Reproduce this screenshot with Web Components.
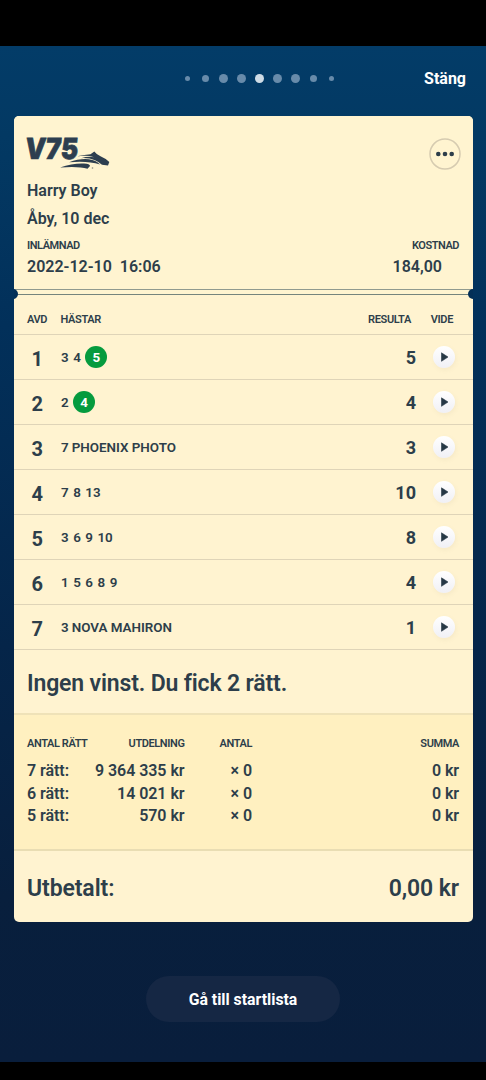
<!DOCTYPE html>
<html lang="sv">
<head>
<meta charset="utf-8">
<title>V75</title>
<style>
  html, body { margin: 0; height: 100%; background: #000; }
  body { font-family: Roboto, "Liberation Sans", sans-serif; font-weight: 600; color: #2d3e4a; overflow: hidden; }
</style>
</head>
<body>
<ticket-screen>
  <page-dots slot="dots"></page-dots>
  <bet-ticket>
    <ticket-head></ticket-head>
    <leg-header></leg-header>
    <leg-row avd="1" horses="3 4 *5" result="5"></leg-row>
    <leg-row avd="2" horses="2 *4" result="4"></leg-row>
    <leg-row avd="3" horses="7" name="PHOENIX PHOTO" result="3"></leg-row>
    <leg-row avd="4" horses="7 8 13" result="10"></leg-row>
    <leg-row avd="5" horses="3 6 9 10" result="8"></leg-row>
    <leg-row avd="6" horses="1 5 6 8 9" result="4"></leg-row>
    <leg-row avd="7" horses="3" name="NOVA MAHIRON" result="1"></leg-row>
    <ticket-verdict>Ingen vinst. Du fick 2 rätt.</ticket-verdict>
    <payout-table></payout-table>
    <ticket-total><span>Utbetalt:</span><span>0,00 kr</span></ticket-total>
  </bet-ticket>
  <pill-button slot="action">Gå till startlista</pill-button>
</ticket-screen>

<script>
const define = (name, html, setup) => {
  const template = document.createElement('template');
  template.innerHTML = html;
  customElements.define(name, class extends HTMLElement {
    constructor() {
      super();
      this.attachShadow({ mode: 'open' }).append(template.content.cloneNode(true));
    }
    connectedCallback() { if (setup) setup(this, this.shadowRoot); }
  });
};

define('ticket-screen', `
<style>
  :host { display: flex; flex-direction: column; box-sizing: border-box; height: 1016px; margin-top: 46px; width: 486px;
    background: linear-gradient(#033c68 0, #033963 90px, #02305a 280px, #052549 600px, #081f3d 850px, #091e3c 100%); }
  header { display: grid; grid-template-columns: 1fr auto 1fr; align-items: center; height: 64px; padding: 0 20px 0 52px; margin-bottom: 5.500px; }
  .close { justify-self: end; font-size: 16px; font-weight: 700; color: #fff; line-height: 24px; padding-top: 2px; }
  main { padding: 0 13px; }
  footer { display: flex; justify-content: center; margin-top: 53.500px; }
</style>
<header><i></i><slot name="dots"></slot><span class="close">Stäng</span></header>
<main><slot></slot></main>
<footer><slot name="action"></slot></footer>`);

define('page-dots', `
<style>
  :host { display: grid; grid-template-columns: repeat(9, 18px); place-items: center; }
  i { width: 9px; height: 9px; border-radius: 50%; background: #688baa; }
  .s { width: 5px; height: 5px; } .m { width: 7px; height: 7px; } .on { background: #cfdce6; }
</style>
<i class="s"></i><i class="m"></i><i></i><i></i><i class="on"></i><i></i><i></i><i class="m"></i><i class="s"></i>`);

define('bet-ticket', `
<style>
  :host { display: block; width: 459px; margin-left: .5px; border-radius: 5px; background: #fff3d0; overflow: hidden; }
</style><slot></slot>`);

define('ticket-head', `
<style>
  :host { display: block; box-sizing: border-box; height: 179.500px; padding: 19.500px 13.5px 0; position: relative;
    background: #fff4d0; }
  .top { display: flex; justify-content: space-between; height: 42px; }
  .more { margin: 3px -2px 0 0; }
  svg { display: block; overflow: visible; }
  .line { font-size: 16px; line-height: 27.800px; }
  .pair { display: flex; justify-content: space-between; }
  .caps { font-size: 11px; line-height: 19px; margin-top: 3.500px; letter-spacing: -.45px; }
  .vals { font-size: 16px; line-height: 22px; letter-spacing: 0; white-space: pre; margin-top: .5px; }
  .vals span:last-child { margin-right: 17px; }
  .perf { position: absolute; left: 0; right: 0; top: 173.5px; height: 4px; border-top: 1px solid #909a8f; border-bottom: 1px solid #75847d; }
  .notch { position: absolute; width: 10px; height: 10px; border-radius: 50%; background: #032f57; top: 173.500px; }
</style>
<div class="top">
  <svg width="86" height="36" viewBox="0 0 86 36">
    <text transform="translate(-1.500 24) skewX(3)" font-family="Inter, Roboto, sans-serif" font-weight="900" font-style="italic" font-size="29" textLength="53" lengthAdjust="spacingAndGlyphs" fill="#2d3e4f" stroke="#2d3e4f" stroke-width=".7">V75</text>
    <g fill="#2d3e4f">
      <path d="M50 21.300Q58 19.600 63.500 19.300L67.300 16.500Q69.500 19.500 73.500 21.200Q79 23.500 82.300 27L81 30.400L75 29.800Q72.500 27.200 68 25.200Q62 22.700 54 23.200Q61 21.200 67 22.200Q61 19.900 50 21.300Z"/>
      <path d="M42 27.300Q53 23.200 62 24.300Q69 25.400 73 29.400Q60 25.500 42 27.300Z"/>
      <path d="M33 32.600Q46 28.100 57 28.600Q63 29 63 31L60.500 33.800Q51 31 33 32.600Z"/>
    </g>
    <circle cx="65.500" cy="33" r=".8" fill="#8a8c81"/>
  </svg>
  <svg class="more" width="32" height="32" viewBox="0 0 32 32">
    <circle cx="16" cy="16" r="15" fill="none" stroke="#d6cbb0" stroke-width="1.500"/>
    <g fill="#2d3e4a"><circle cx="9.300" cy="16" r="2.300"/><circle cx="16" cy="16" r="2.300"/><circle cx="22.700" cy="16" r="2.300"/></g>
  </svg>
</div>
<div class="line">Harry Boy</div>
<div class="line">Åby, 10 dec</div>
<div class="pair caps"><span>INLÄMNAD</span><span>KOSTNAD</span></div>
<div class="pair vals"><span>2022-12-10  16:06</span><span>184,00</span></div>
<div class="perf"></div><i class="notch" style="left:-5.500px"></i><i class="notch" style="right:-5.500px"></i>`);

const LEG_GRID = 'display: grid; grid-template-columns: 47.500px 1fr auto 56.500px; align-items: center; box-sizing: border-box; border-bottom: 1px solid #dfd4b8;';

define('leg-header', `
<style>
  :host { ${LEG_GRID} grid-template-columns: 33.5px 1fr auto 42px 6px; height: 40px; padding: 11px 13.5px 0; font-size: 11px; line-height: 20px; letter-spacing: -.35px; }
  .v { justify-self: end; }
</style>
<span>AVD</span><span>HÄSTAR</span><span>RESULTA</span><span class="v">VIDE</span>`);

define('leg-row', `
<style>
  :host { ${LEG_GRID} height: 45px; }
  .avd { font-size: 20px; font-weight: 700; text-align: center; line-height: 24px; padding-top: 3px; }
  .horses { display: flex; align-items: center; gap: 4.500px; font-size: 13.400px; line-height: 22px; }
  .horses span { padding-top: 2px; }
  .horses .hit { padding: 0; width: 22px; height: 22px; line-height: 23px; border-radius: 50%; background: #059b3e; color: #fff; font-weight: 700; text-align: center; }
  .name { margin-left: -1.500px; }
  .result { font-size: 18px; font-weight: 700; line-height: 24px; padding-top: 2px; }
  .play { width: 22px; height: 22px; margin-left: 16.500px; border-radius: 50%; background: linear-gradient(#fff, #f0f0f5); box-shadow: 1px 2px 4px #a3957018; }
  svg { display: block; }
</style>
<span class="avd"></span><span class="horses"></span><span class="result"></span>
<span class="play"><svg width="22" height="22" viewBox="0 0 22 22"><path d="M8.500 6.800L15 11L8.500 15.300Z" fill="#263845" stroke="#263845" stroke-width=".6" stroke-linejoin="round"/></svg></span>`,
(el, root) => {
  root.querySelector('.avd').textContent = el.getAttribute('avd');
  root.querySelector('.result').textContent = el.getAttribute('result');
  const box = root.querySelector('.horses');
  for (const h of el.getAttribute('horses').split(' ')) {
    const s = document.createElement('span');
    s.textContent = h.replace('*', '');
    if (h[0] === '*') s.className = 'hit';
    box.append(s);
  }
  if (el.hasAttribute('name')) {
    const s = document.createElement('span');
    s.className = 'name';
    s.textContent = el.getAttribute('name');
    box.append(s);
  }
});

define('ticket-verdict', `
<style>
  :host { display: block; box-sizing: border-box; height: 65px; padding: 20px 13.5px 0; font-size: 23px; line-height: 28px; letter-spacing: -.15px; border-bottom: 2px solid #efe2b8; }
</style><slot></slot>`);

define('payout-table', `
<style>
  :host { display: grid; grid-template-columns: 68px 89.500px 67.500px 1fr; grid-template-rows: 31px; grid-auto-rows: 22.500px; align-items: center; align-content: start;
    box-sizing: border-box; height: 136px; padding: 14px 13.5px 0; background: #fff0c0; border-bottom: 2px solid #e9ddb3; font-size: 16px; line-height: 22px; white-space: nowrap; letter-spacing: -.05px; }
  span { justify-self: end; } span:nth-of-type(4n+1) { justify-self: start; }
  .h { font-size: 11px; align-self: start; line-height: 30px; letter-spacing: -.4px; }
</style>
<span class="h">ANTAL RÄTT</span><span class="h">UTDELNING</span><span class="h">ANTAL</span><span class="h">SUMMA</span>
<span>7 rätt:</span><span>9 364 335 kr</span><span>× 0</span><span>0 kr</span>
<span>6 rätt:</span><span>14 021 kr</span><span>× 0</span><span>0 kr</span>
<span>5 rätt:</span><span>570 kr</span><span>× 0</span><span>0 kr</span>`);

define('ticket-total', `
<style>
  :host { display: flex; justify-content: space-between; box-sizing: border-box; height: 71px; padding: 23px 13.5px 0; font-size: 23px; line-height: 30px; letter-spacing: -.1px; }
</style><slot></slot>`);

define('pill-button', `
<style>
  :host { display: block; width: 194px; height: 46px; border-radius: 23px; background: #152744; color: #fff; font-size: 15.800px; font-weight: 700; line-height: 48px; text-align: center; }
</style><slot></slot>`);
</script>
</body>
</html>
